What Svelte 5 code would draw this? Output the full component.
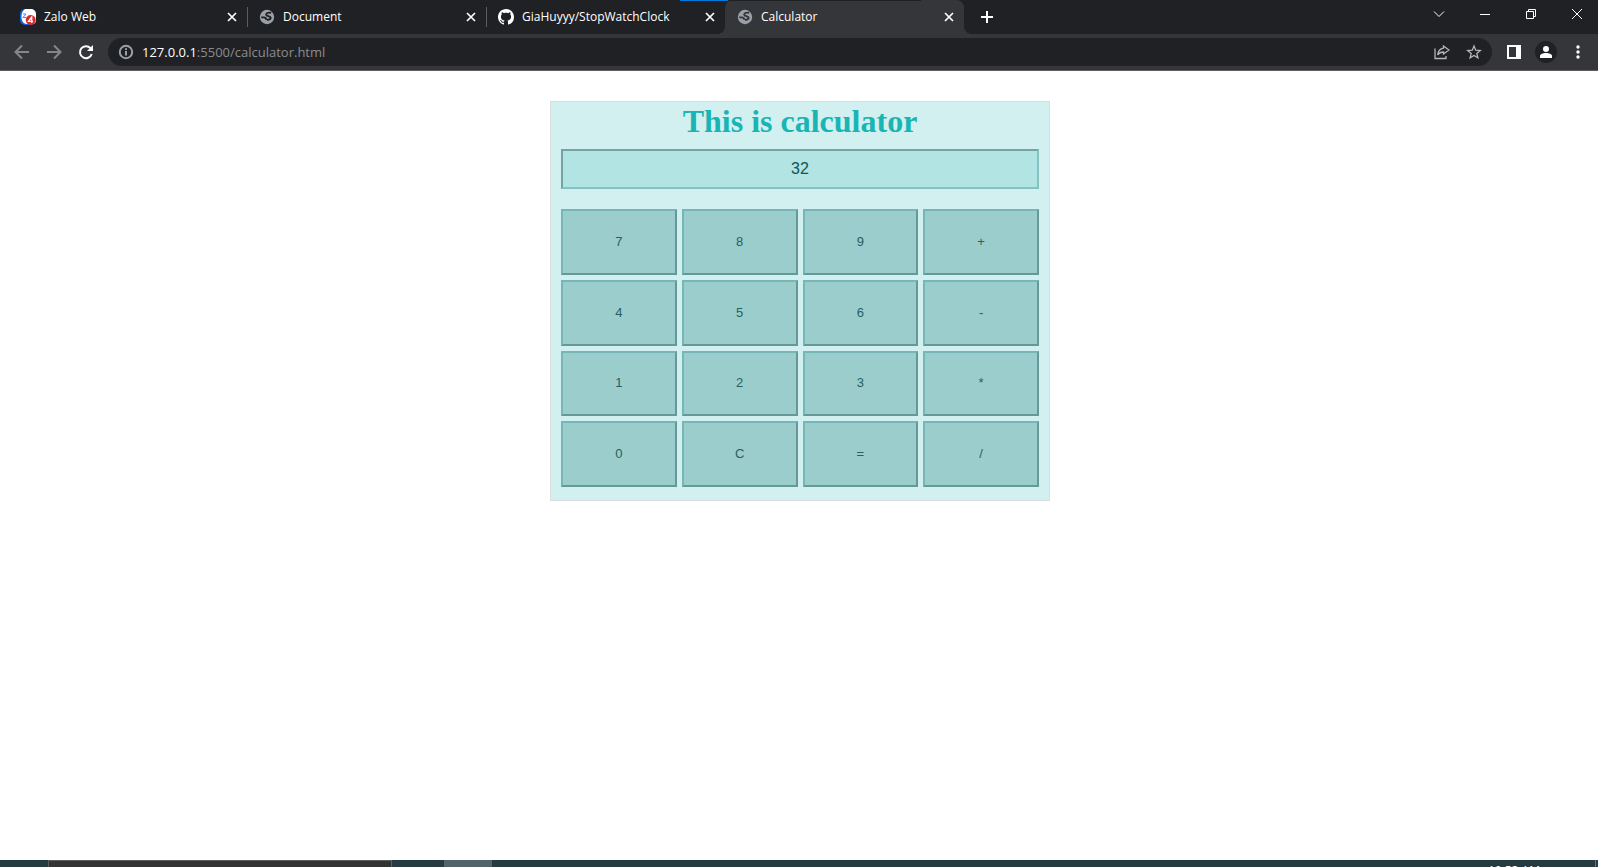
<script>
  const tabs = [
    { title: 'Zalo Web', icon: 'zalo' },
    { title: 'Document', icon: 'globe' },
    { title: 'GiaHuyyy/StopWatchClock', icon: 'github' },
    { title: 'Calculator', icon: 'globe', active: true }
  ];
  const keys = ['7', '8', '9', '+', '4', '5', '6', '-', '1', '2', '3', '*', '0', 'C', '=', '/'];

  let display = $state('32');
  let stored = null;
  let operator = null;
  let fresh = true;

  function compute(a, b, op) {
    if (op === '+') return a + b;
    if (op === '-') return a - b;
    if (op === '*') return a * b;
    return a / b;
  }

  function press(key) {
    if (/\d/.test(key)) {
      display = fresh ? key : display + key;
      fresh = false;
    } else if (key === 'C') {
      display = '';
      stored = operator = null;
      fresh = true;
    } else {
      if (operator && !fresh) display = String(compute(stored, Number(display), operator));
      stored = Number(display);
      operator = key === '=' ? null : key;
      fresh = true;
    }
  }
</script>

{#snippet favicon(name)}
  {#if name === 'zalo'}
    <svg width="16" height="16" viewBox="0 0 16 16" aria-hidden="true">
      <rect width="16" height="16" rx="5" fill="#0b63e5" />
      <path d="M5 0h6a5 5 0 0 1 5 5v6a4 4 0 0 1-4 4H6C2.500 14 1.500 11 1.500 8S2 2 5 0z" fill="#fff" />
      <path d="M3 5h3L3 8.500h3" stroke="#3d8bf0" fill="none" />
      <circle cx="10.700" cy="11" r="5" fill="#db2b2b" />
      <path d="M11.700 14V8L8.500 12.300h4.500" stroke="#fff" stroke-width="1.300" fill="none" />
    </svg>
  {:else if name === 'github'}
    <svg width="16" height="16" viewBox="0 0 16 16" aria-hidden="true">
      <path fill="#fff" d="M8 0C3.580 0 0 3.580 0 8c0 3.540 2.290 6.530 5.470 7.590.4.070.55-.17.55-.38 0-.19-.01-.82-.01-1.490-2.010.37-2.530-.49-2.690-.94-.09-.23-.48-.94-.82-1.130-.28-.15-.68-.52-.01-.53.63-.01 1.080.58 1.230.82.72 1.210 1.870.87 2.330.66.07-.52.28-.87.51-1.070-1.780-.2-3.640-.89-3.640-3.950 0-.87.31-1.590.82-2.150-.08-.2-.36-1.020.08-2.120 0 0 .67-.21 2.200.82.64-.18 1.320-.27 2-.27s1.360.09 2 .27c1.530-1.040 2.200-.82 2.200-.82.44 1.100.16 1.920.08 2.120.51.56.82 1.270.82 2.150 0 3.070-1.870 3.750-3.650 3.950.29.25.54.73.54 1.480 0 1.070-.01 1.930-.01 2.200 0 .21.15.46.55.38A8.010 8.010 0 0 0 16 8c0-4.420-3.580-8-8-8z" />
    </svg>
  {:else}
    <svg width="16" height="16" viewBox="0 0 16 16" aria-hidden="true">
      <circle cx="8" cy="8" r="7.200" fill="#9aa0a6" />
      <path class="land" d="M12.200 3.800c-2.200-.4-5 .1-5 1.900 0 1.900 4.500 1 4.500 3.100 0 1.700-1.900 2.100-3.700 2.200M2.200 8.400h2.400c1.700 0 2.600 1.100 2.900 2.400" />
    </svg>
  {/if}
{/snippet}

<div class="screen">
  <header>
    <div class="strip">
      <nav class="tabs" aria-label="Tabs">
        {#each tabs as tab}
          <div class="tab" class:active={tab.active}>
            {@render favicon(tab.icon)}
            <a class="title" href="#tab">{tab.title}</a>
            <button class="close" aria-label="Close tab">
              <svg width="10" height="10" viewBox="0 0 10 10"><path d="M1 1l8 8M9 1L1 9" /></svg>
            </button>
          </div>
        {/each}
        <button class="new" aria-label="New tab">
          <svg width="12" height="12" viewBox="0 0 12 12"><path d="M6 0v12M0 6h12" /></svg>
        </button>
      </nav>
      <div class="controls">
        <button aria-label="Search tabs"><svg width="12" height="12" viewBox="0 0 12 12"><path d="M1 3.500l5 5 5-5" /></svg></button>
        <button aria-label="Minimize"><svg width="12" height="12" viewBox="0 0 12 12"><path d="M1 6.500h10" /></svg></button>
        <button aria-label="Restore"><svg width="12" height="12" viewBox="0 0 12 12"><path d="M1.500 3.500h7v7h-7zM3.500 3.500v-2h7v7h-2" /></svg></button>
        <button aria-label="Close"><svg width="12" height="12" viewBox="0 0 12 12"><path d="M1 1l10 10M11 1L1 11" /></svg></button>
      </div>
      <span class="accent"></span>
    </div>
    <div class="toolbar">
      <button class="nav dim" aria-label="Back"><svg width="16" height="16" viewBox="0 0 16 16"><path d="M15 8H2M8 1.500L1.500 8 8 14.500" /></svg></button>
      <button class="nav dim" aria-label="Forward"><svg width="16" height="16" viewBox="0 0 16 16"><path d="M1 8h13M8 1.500L14.500 8 8 14.500" /></svg></button>
      <button class="nav" aria-label="Reload"><svg width="16" height="16" viewBox="0 0 16 16"><path d="M13.700 10A6 6 0 1 1 12.500 4.200" /><path class="solid" d="M15 1v6H9z" /></svg></button>
      <div class="address">
        <svg class="info" width="16" height="16" viewBox="0 0 16 16" aria-hidden="true"><circle cx="8" cy="8" r="6.200" /><path d="M8 7v4.500M8 4.300v1.700" /></svg>
        <a class="url" href="#address"><b>127.0.0.1</b>:5500/calculator.html</a>
        <button class="small" aria-label="Share"><svg width="16" height="16" viewBox="0 0 16 16"><path d="M1 4.500v10h11V12M9.500 2l5.500 4-5.500 4V8C7 8 5 9 3.700 11 4 7.500 6 4.700 9.500 4.200z" /></svg></button>
        <button class="small" aria-label="Bookmark"><svg width="16" height="16" viewBox="0 0 16 16"><path d="M8 2l1.700 4.200 4.600.3-3.500 3 1.100 4.400L8 11.500l-3.900 2.400 1.100-4.400-3.500-3 4.600-.3z" /></svg></button>
      </div>
      <button class="nav" aria-label="Side panel"><svg width="14" height="14" viewBox="0 0 14 14"><path class="solid" fill-rule="evenodd" d="M0 0h14v14H0zM2 2v10h7V2z" /></svg></button>
      <button class="nav" aria-label="Profile"><svg width="22" height="22" viewBox="0 0 22 22"><circle class="disc" cx="11" cy="11" r="11" /><circle class="solid" cx="11" cy="8" r="3" /><path class="solid" d="M5 17v-2c0-2 3-3 6-3s6 1 6 3v2z" /></svg></button>
      <button class="nav" aria-label="Menu"><svg width="4" height="14" viewBox="0 0 4 14"><circle class="solid" cx="2" cy="2" r="1.700" /><circle class="solid" cx="2" cy="7" r="1.700" /><circle class="solid" cx="2" cy="12" r="1.700" /></svg></button>
    </div>
  </header>

  <main>
    <section class="calculator">
      <h1>This is calculator</h1>
      <input class="display" type="text" aria-label="Result" bind:value={display} />
      <div class="keys">
        {#each keys as key}
          <button onclick={() => press(key)}>{key}</button>
        {/each}
      </div>
    </section>
  </main>

  <footer>
    <span class="search"></span>
    <span class="running"></span>
    <time>10:53 AM</time>
    <span class="peek"></span>
  </footer>
</div>

<style>
  :global(body) {
    margin: 0;
    background: #fff;
  }
  .screen {
    display: flex;
    flex-direction: column;
    height: 100vh;
    overflow: hidden;
  }
  button {
    padding: 0;
    font: inherit;
  }
  header {
    flex: none;
    font-family: 'Open Sans', 'Noto Sans', sans-serif;
    color: #fff;
    background: #35363a;
    border-bottom: 1px solid #5d5a63;
  }
  header button {
    display: flex;
    align-items: center;
    justify-content: center;
    flex: none;
    background: none;
    border: 0;
    color: inherit;
  }
  header a {
    color: inherit;
    text-decoration: none;
  }
  header svg {
    flex: none;
    fill: none;
    stroke: currentColor;
  }
  header .solid {
    fill: currentColor;
    stroke: none;
  }
  .strip {
    position: relative;
    display: flex;
    justify-content: space-between;
    height: 34px;
    background: #202124;
  }
  .tabs {
    display: flex;
    flex: 1;
    min-width: 0;
    padding-left: 8px;
  }
  .tab {
    position: relative;
    display: flex;
    align-items: center;
    flex: 0 1 239px;
    min-width: 0;
    gap: 8px;
    padding: 0 7px 0 12px;
    box-sizing: border-box;
    font-size: 12px;
  }
  .tab svg {
    stroke: none;
  }
  .tab .close svg {
    stroke: currentColor;
    stroke-width: 1.7;
  }
  .tab:nth-child(2)::before,
  .tab:nth-child(3)::before {
    content: '';
    position: absolute;
    left: 0;
    top: 7px;
    width: 1px;
    height: 20px;
    background: #5b5c60;
  }
  .title {
    flex: 1;
    padding-bottom: 2px;
    overflow: hidden;
    white-space: nowrap;
  }
  .close {
    width: 16px;
    height: 16px;
  }
  .land {
    fill: none;
    stroke: #202124;
    stroke-width: 1.9;
  }
  .active {
    background: #35363a;
    border-radius: 8px 8px 0 0;
  }
  .active .land {
    stroke: #35363a;
  }
  .active::before,
  .active::after {
    content: '';
    position: absolute;
    bottom: 0;
    width: 8px;
    height: 8px;
  }
  .active::before {
    right: 100%;
    background: radial-gradient(circle at 0 0, #202124 8px, #35363a 8px);
  }
  .active::after {
    left: 100%;
    background: radial-gradient(circle at 100% 0, #202124 8px, #35363a 8px);
  }
  .new {
    width: 28px;
    margin-left: 9px;
  }
  .new svg {
    stroke-width: 2;
  }
  .accent {
    position: absolute;
    left: 680px;
    top: 0;
    width: 241px;
    height: 1px;
    background: linear-gradient(to right, #0078d7 48px, #202124 48px);
  }
  .controls {
    display: flex;
    height: 28px;
    margin-right: -2px;
  }
  .controls button {
    width: 46px;
  }
  .toolbar {
    display: flex;
    align-items: center;
    height: 36px;
    padding: 0 4px 0 6px;
  }
  .nav {
    width: 32px;
    height: 32px;
  }
  .nav svg {
    stroke-width: 2;
  }
  .dim {
    color: #85868a;
  }
  header .disc {
    fill: #202124;
    stroke: none;
  }
  .address {
    display: flex;
    align-items: center;
    flex: 1;
    min-width: 0;
    height: 28px;
    margin: 0 6px;
    padding: 0 2px 0 10px;
    border-radius: 14px;
    background: #202124;
    color: #9aa0a6;
  }
  .info {
    stroke-width: 2;
  }
  .url {
    flex: 1;
    margin-left: 8px;
    overflow: hidden;
    white-space: nowrap;
    font-size: 13px;
    color: #8b8c8f;
  }
  .url b {
    font-weight: 400;
    color: #fff;
  }
  .small {
    width: 32px;
    height: 28px;
    color: #b4b6b9;
  }
  .small svg {
    stroke-width: 1.3;
  }
  main {
    flex: 1;
    min-height: 0;
    padding: 30px 0 0 2px;
  }
  .calculator {
    width: 500px;
    max-width: 100%;
    margin: 0 auto;
    padding: 0 10px 13px;
    box-sizing: border-box;
    border: 1px solid #d9dddd;
    background: #d2f0ef;
  }
  h1 {
    margin: 0 0 8px;
    font: 700 32px/39px 'Liberation Serif', serif;
    text-align: center;
    color: #19b5b5;
  }
  .display {
    display: block;
    width: 100%;
    height: 40px;
    margin-bottom: 20px;
    padding: 0;
    box-sizing: border-box;
    border: 2px solid;
    border-color: #75a3a3 #83c3c3 #83c3c3 #75a3a3;
    border-radius: 0;
    outline: 0;
    background: #b1e4e2;
    font: 16px 'Liberation Sans', sans-serif;
    text-align: center;
    color: #0f5555;
  }
  .keys {
    display: grid;
    grid-template: repeat(4, 1fr) / repeat(4, 1fr);
    gap: 5px;
    height: 278px;
  }
  .keys button {
    padding-bottom: 1px;
    border: 2px solid;
    border-color: #75b7b7 #669898 #669898 #75b7b7;
    border-radius: 0;
    background: #9bcdcc;
    font: 13px 'Liberation Sans', sans-serif;
    color: #285f60;
  }
  footer {
    display: flex;
    flex: none;
    height: 7px;
    overflow: hidden;
    background: #263a42;
    color: #fff;
  }
  .search {
    width: 344px;
    margin: 0 52px 0 48px;
    box-sizing: border-box;
    border: 1px solid #5c5c5c;
    border-bottom: 0;
    background: #333;
  }
  .running {
    width: 48px;
    background: #52646b;
  }
  time {
    margin: 3px 55px 0 auto;
    font: 12px/16px 'Open Sans', sans-serif;
  }
  .peek {
    width: 2px;
    border-left: 1px solid #68777d;
  }
</style>
